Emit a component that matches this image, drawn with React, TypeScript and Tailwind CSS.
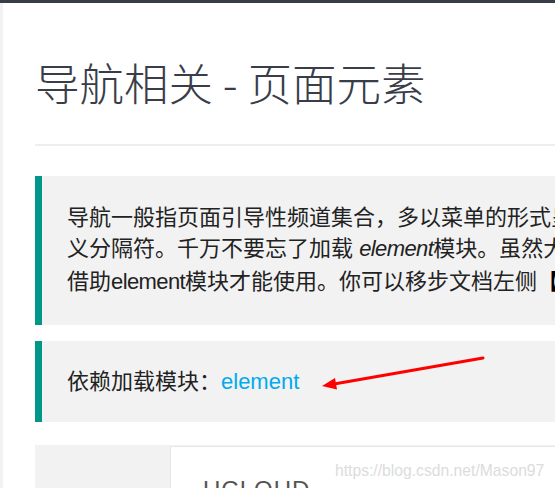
import React from "react";

const cjk = { fontFamily: '"Noto Sans CJK SC", "Liberation Sans", sans-serif' };
const body = { fontFamily: '"Liberation Sans", "Noto Sans CJK SC", sans-serif' };

function Blockquote({ children }: { children: React.ReactNode }) {
  return (
    <div className="w-[1000px] border-l-[7px] border-[#009688] bg-[#f2f2f2] pl-[25px] text-[22px] leading-[31px] text-[#222]">
      {children}
    </div>
  );
}

export default function App() {
  return (
    <div className="relative h-[488px] w-full overflow-hidden bg-white">
      <div className="h-[3px] bg-[#393D49]" />
      <div className="flex">
        <div className="w-[3px] shrink-0 self-stretch bg-[#f2f2f2]" />
        <div className="min-w-0 flex-1 pl-[32px]">
          <h2
            className="w-[1000px] border-b-2 border-[#eee] pb-[37px] pt-[54px] text-[44.5px] font-light leading-[50px] text-[#393D49]"
            style={cjk}
          >
            导航相关 - 页面元素
          </h2>

          <div className="mt-[30px]" style={body}>
            <Blockquote>
              <div className="pb-[30px] pt-[26px]">
                <div className="h-[31px] whitespace-nowrap">
                  导航一般指页面引导性频道集合，多以菜单的形式呈现，可应用于头部和侧边，是整个网页画龙点睛般的存在。面包屑结构简单，支持自定
                </div>
                <div className="h-[31px] whitespace-nowrap">
                  义分隔符。千万不要忘了加载 <em className="tracking-[-0.6px]">element</em>
                  模块。虽然大部分行为都是在加载完该模块后自动完成的，但一些交互操作，如呼出二级菜单等，需
                </div>
                <div className="h-[31px] whitespace-nowrap">
                  借助<span className="tracking-[-0.6px]">element</span>模块才能使用。你可以移步文档左侧
                  <b className="font-bold leading-[31px] text-black" style={cjk}>【</b>内置组件 - 常用元素操作 element】了解详情。
                </div>
              </div>
            </Blockquote>

            <div className="mt-[16px]">
              <Blockquote>
                <div className="h-[81px] whitespace-nowrap py-[25px]">
                  依赖加载模块：<span className="text-[#01AAED]">element</span>
                </div>
              </Blockquote>
            </div>
          </div>

          <div className="mt-[23px] flex w-[1000px] bg-[#f2f2f2]">
            <div className="w-[135px] shrink-0" />
            <div className="mt-px h-[80px] flex-1 border border-[#e6e6e6] bg-white pl-[32px] pt-[31px]">
              <div className="text-[24px] font-light leading-none tracking-[1px] text-[#555]" style={body}>
                UCLOUD
              </div>
            </div>
          </div>
        </div>
      </div>

      <div
        className="absolute left-[335px] top-[459px] whitespace-nowrap text-[15.7px] text-[#dcdcdc]"
        style={body}
      >
        https://blog.csdn.net/Mason97
      </div>

      <svg
        className="pointer-events-none absolute left-0 top-0"
        width="555"
        height="488"
        viewBox="0 0 555 488"
      >
        <line x1="483" y1="358" x2="334" y2="384" stroke="#ff0000" strokeWidth="3" strokeLinecap="round" />
        <polygon points="322,386 337,389.5 335,378" fill="#ff0000" />
      </svg>
    </div>
  );
}
